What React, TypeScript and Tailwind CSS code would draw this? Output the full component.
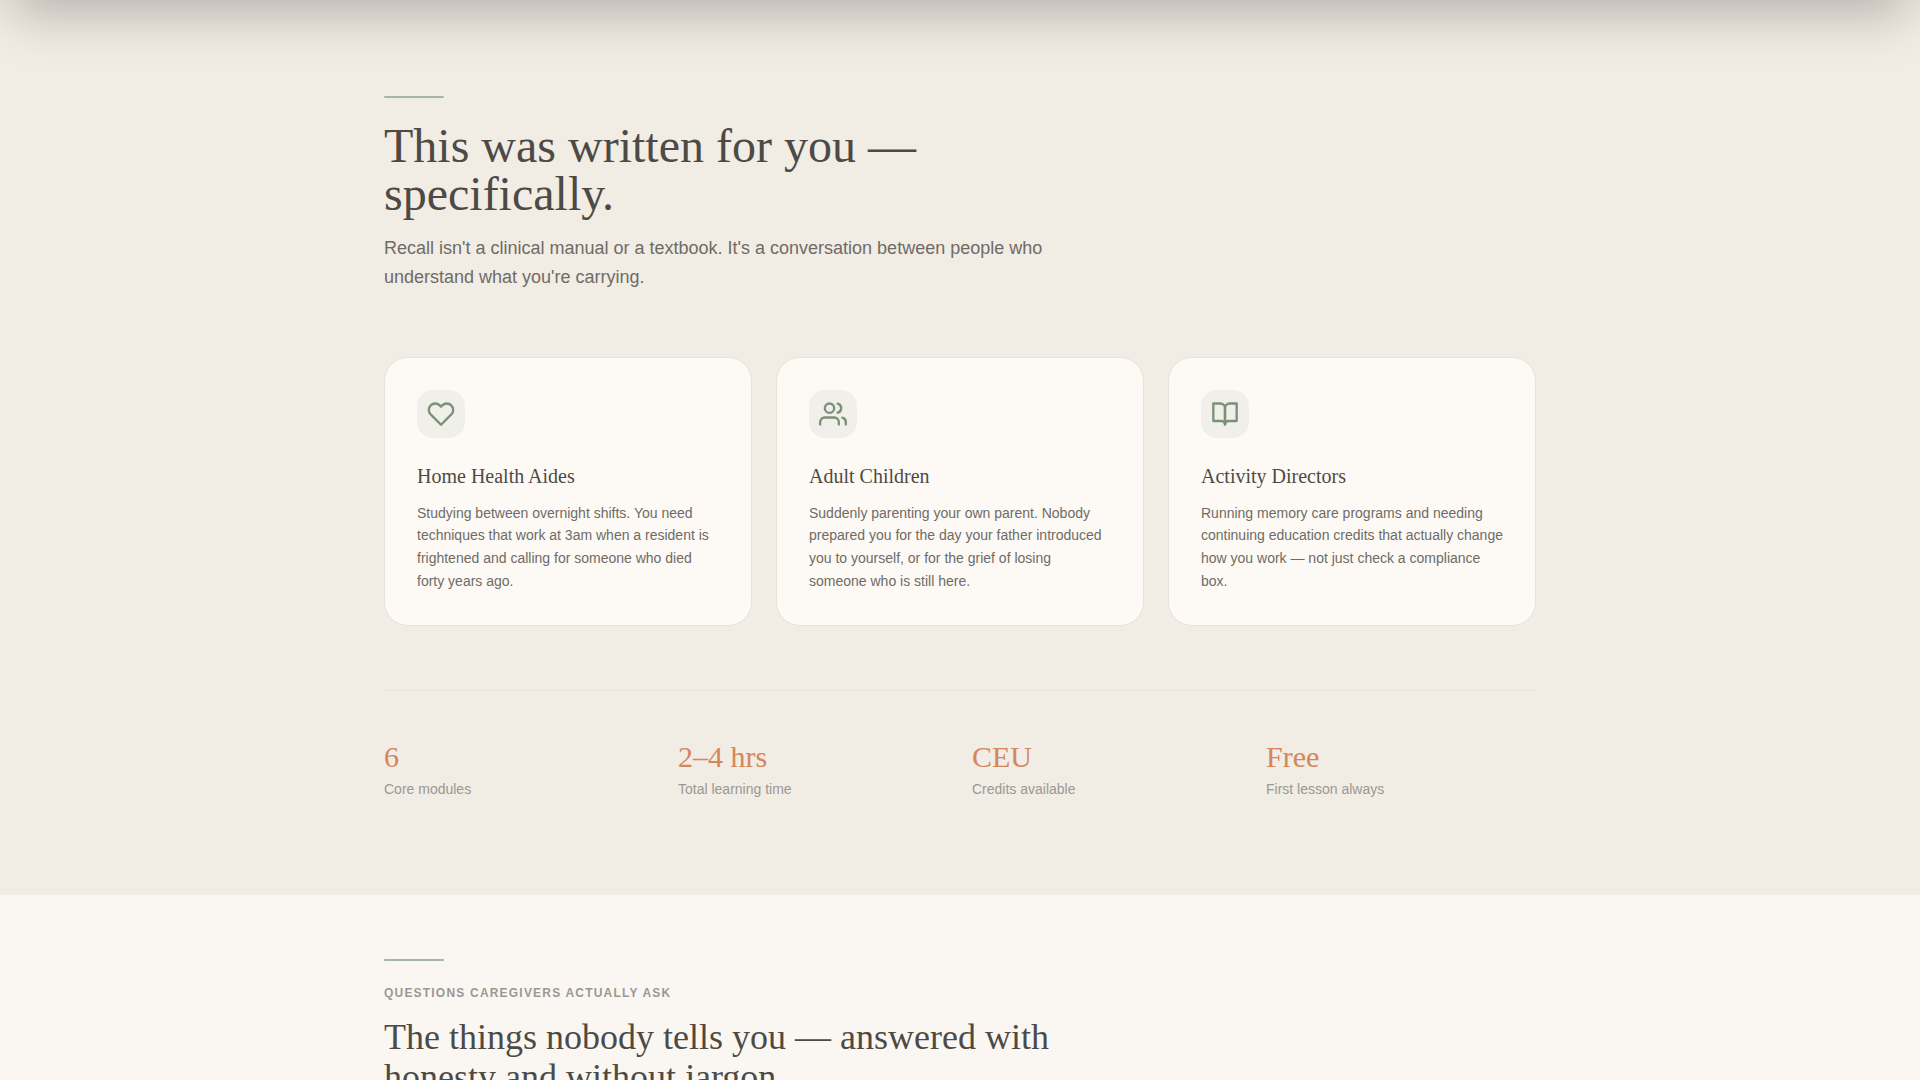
import React from 'react';
import { FiBookOpen, FiHeart, FiUsers } from 'react-icons/fi';

const audiences = [
    {
        icon: FiHeart,
        title: 'Home Health Aides',
        text: 'Studying between overnight shifts. You need techniques that work at 3am when a resident is frightened and calling for someone who died forty years ago.',
    },
    {
        icon: FiUsers,
        title: 'Adult Children',
        text: 'Suddenly parenting your own parent. Nobody prepared you for the day your father introduced you to yourself, or for the grief of losing someone who is still here.',
    },
    {
        icon: FiBookOpen,
        title: 'Activity Directors',
        text: 'Running memory care programs and needing continuing education credits that actually change how you work — not just check a compliance box.',
    },
];

const stats = [
    { value: '6', label: 'Core modules' },
    { value: '2–4 hrs', label: 'Total learning time' },
    { value: 'CEU', label: 'Credits available' },
    { value: 'Free', label: 'First lesson always' },
];

const serif = "font-['Liberation_Serif',serif]";

const Rule = () => <div className="h-0.5 w-15 rounded-full bg-[#a7b5a8]" />;

const App: React.FC = () => {
    return (
        <div className="h-screen overflow-hidden bg-[#faf7f2] font-['Liberation_Sans',sans-serif] text-[#4d4a46]">
            {/* Bottom of the hero panel, its shadow falls over the section below */}
            <div className="relative -mt-96 h-96 shadow-2xl" />

            <section className="bg-[#f1ece4] px-8 py-24">
                <div className="mx-auto max-w-6xl">
                    <Rule />
                    <h2 className={`${serif} mt-6 max-w-2xl text-5xl`}>
                        This was written for you — specifically.
                    </h2>
                    <p className="mt-4 max-w-2xl text-lg leading-relaxed text-[#6f6b66]">
                        Recall isn't a clinical manual or a textbook. It's a conversation between people who understand what you're carrying.
                    </p>

                    <div className="mt-16 grid grid-cols-3 gap-6">
                        {audiences.map(({ icon: Icon, title, text }) => (
                            <article key={title} className="rounded-3xl border border-[#e8e3da] bg-[#fdfaf5] p-8">
                                <div className="flex size-12 items-center justify-center rounded-2xl bg-[#f0efe9] text-[#7a9178]">
                                    <Icon size={28} strokeWidth={2} aria-hidden="true" />
                                </div>
                                <h3 className={`${serif} mt-6 text-xl`}>{title}</h3>
                                <p className="mt-3 text-sm leading-relaxed text-[#6f6b66]">{text}</p>
                            </article>
                        ))}
                    </div>

                    <dl className="mt-16 grid grid-cols-4 gap-6 border-t border-[#e8e3da] pt-12">
                        {stats.map(({ value, label }) => (
                            <div key={label} className="flex flex-col-reverse gap-1">
                                <dt className="text-sm text-[#9b9893]">{label}</dt>
                                <dd className={`${serif} text-3xl text-[#d4875a]`}>{value}</dd>
                            </div>
                        ))}
                    </dl>
                </div>
            </section>

            <section className="px-8 py-16">
                <div className="mx-auto max-w-6xl">
                    <Rule />
                    <p className="mt-6 text-xs font-bold uppercase tracking-widest text-[#9b9893]">
                        Questions caregivers actually ask
                    </p>
                    <h2 className={`${serif} mt-4 max-w-2xl text-4xl`}>
                        The things nobody tells you — answered with honesty and without jargon.
                    </h2>
                </div>
            </section>
        </div>
    );
};

export default App;
